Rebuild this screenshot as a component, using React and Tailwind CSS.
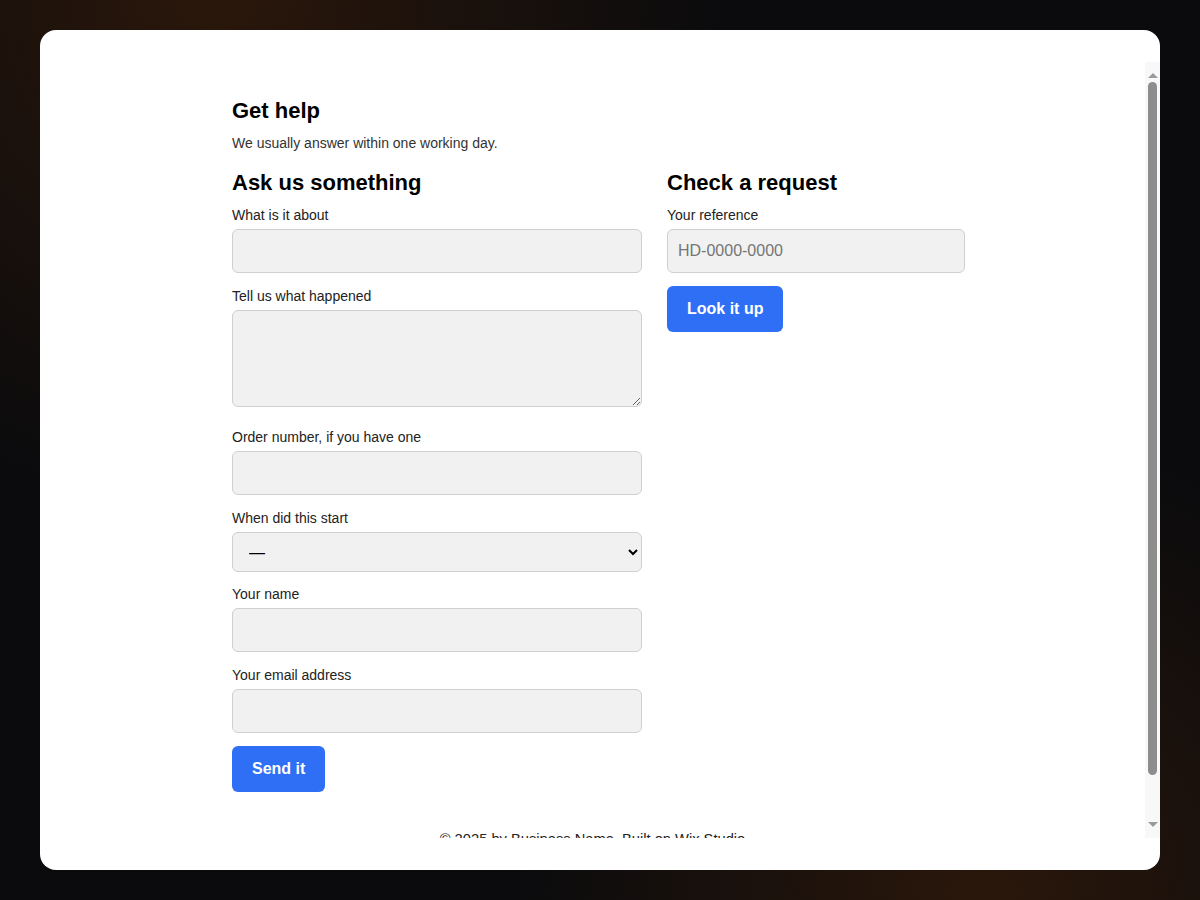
import React from 'react'

const inputCls = "block w-full h-[44px] rounded-md border border-[#cfcfcf] bg-[#f1f1f1] px-2.5 text-base text-[#222] placeholder:text-[#757575] outline-none"

const Field = ({ label, children, className = "mb-[13px]" }) => (
    <div className={className}>
        <label className="block text-sm leading-5 text-[#222] mb-1">{label}</label>
        {children}
    </div>
)

export default function App() {
    return (
        <div className="h-[900px] w-full overflow-hidden bg-[#0b0b0d] bg-[radial-gradient(circle_at_18%_0%,#2a170b_0%,transparent_38%),radial-gradient(circle_at_82%_100%,#2a170b_0%,transparent_35%)] px-10 py-[30px] font-['Liberation_Sans',Arial,sans-serif]">
            {/* card */}
            <div className="flex h-[840px] rounded-2xl bg-white py-8">
                <div className="flex-1 overflow-y-auto [scrollbar-width:none]">
                    <div className="pl-[192px] pt-[35px]">
                        <h1 className="text-[22px] font-bold leading-7 text-black">Get help</h1>
                        <p className="mt-[8px] text-sm leading-5 text-[#333]">We usually answer within one working day.</p>

                        <div className="mt-[16px] flex gap-[25px]">
                            {/* left form */}
                            <div className="w-[410px]">
                                <h2 className="text-[22px] font-bold leading-7 text-black mb-[8px]">Ask us something</h2>
                                <Field label="What is it about">
                                    <input className={inputCls} />
                                </Field>
                                <Field label="Tell us what happened" className="mb-5">
                                    <textarea className="block w-full h-[97px] rounded-md border border-[#cfcfcf] bg-[#f1f1f1] px-2.5 py-2 text-base outline-none" />
                                </Field>
                                <Field label="Order number, if you have one">
                                    <input className={inputCls} />
                                </Field>
                                <Field label="When did this start" className="mb-3">
                                    <select className="block w-full h-[40px] rounded-md border border-[#cfcfcf] bg-[#f1f1f1] px-3 text-base text-black outline-none">
                                        <option>—</option>
                                    </select>
                                </Field>
                                <Field label="Your name">
                                    <input className={inputCls} />
                                </Field>
                                <Field label="Your email address">
                                    <input className={inputCls} />
                                </Field>
                                <button className="rounded-md bg-[#2f6ff6] px-5 py-3 text-base font-bold leading-[22px] text-white">Send it</button>
                            </div>

                            {/* right column */}
                            <div className="w-[298px]">
                                <h2 className="text-[22px] font-bold leading-7 text-black mb-[8px]">Check a request</h2>
                                <Field label="Your reference">
                                    <input className={inputCls} placeholder="HD-0000-0000" />
                                </Field>
                                <button className="rounded-md bg-[#2f6ff6] px-5 py-3 text-base font-bold leading-[22px] text-white">Look it up</button>
                            </div>
                        </div>
                    </div>

                    <footer className="mt-[37px] pb-8 text-center text-[14.7px] leading-5 text-[#222]">
                        © 2025 by Business Name. Built on Wix Studio
                    </footer>
                </div>

                {/* scrollbar */}
                <div className="flex w-[15px] flex-col bg-[#f8f8f8]">
                    <div className="flex h-[16px] items-end justify-center">
                        <div className="h-0 w-0 border-x-[5px] border-b-[5px] border-x-transparent border-b-[#9a9a9a]"></div>
                    </div>
                    <div className="flex-1">
                        <div className="mx-auto mt-[4px] h-[693px] w-[9px] rounded-full bg-[#8d8d8d]"></div>
                    </div>
                    <div className="flex h-[16px] items-start justify-center">
                        <div className="h-0 w-0 border-x-[5px] border-t-[5px] border-x-transparent border-t-[#9a9a9a]"></div>
                    </div>
                </div>
            </div>
        </div>
    )
}
